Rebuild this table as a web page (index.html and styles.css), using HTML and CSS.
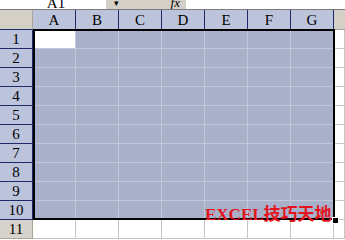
FILE: index.html
```html
<!DOCTYPE html>
<html>
<head>
<meta charset="utf-8">
<link rel="stylesheet" href="styles.css">
</head>
<body>
<div class="app">
  <div class="fbar">
    <div class="namebox"><span class="nb-text">A1</span></div>
    <div class="fbtn"><span class="arrow">▾</span><span class="fx">fx</span></div>
    <div class="fval"></div>
  </div>
  <div class="sheet">
    <div class="grid">
      <div class="corner"></div>
      <div class="ch">A</div><div class="ch">B</div><div class="ch">C</div><div class="ch">D</div><div class="ch">E</div><div class="ch">F</div><div class="ch">G</div><div class="ch-rest"></div>

      <div class="rh">1</div><div class="c active"></div><div class="c"></div><div class="c"></div><div class="c"></div><div class="c"></div><div class="c"></div><div class="c"></div><div class="w"></div>
      <div class="rh">2</div><div class="c"></div><div class="c"></div><div class="c"></div><div class="c"></div><div class="c"></div><div class="c"></div><div class="c"></div><div class="w"></div>
      <div class="rh">3</div><div class="c"></div><div class="c"></div><div class="c"></div><div class="c"></div><div class="c"></div><div class="c"></div><div class="c"></div><div class="w"></div>
      <div class="rh">4</div><div class="c"></div><div class="c"></div><div class="c"></div><div class="c"></div><div class="c"></div><div class="c"></div><div class="c"></div><div class="w"></div>
      <div class="rh">5</div><div class="c"></div><div class="c"></div><div class="c"></div><div class="c"></div><div class="c"></div><div class="c"></div><div class="c"></div><div class="w"></div>
      <div class="rh">6</div><div class="c"></div><div class="c"></div><div class="c"></div><div class="c"></div><div class="c"></div><div class="c"></div><div class="c"></div><div class="w"></div>
      <div class="rh">7</div><div class="c"></div><div class="c"></div><div class="c"></div><div class="c"></div><div class="c"></div><div class="c"></div><div class="c"></div><div class="w"></div>
      <div class="rh">8</div><div class="c"></div><div class="c"></div><div class="c"></div><div class="c"></div><div class="c"></div><div class="c"></div><div class="c"></div><div class="w"></div>
      <div class="rh">9</div><div class="c"></div><div class="c"></div><div class="c"></div><div class="c"></div><div class="c"></div><div class="c"></div><div class="c"></div><div class="w"></div>
      <div class="rh">10</div><div class="c"></div><div class="c"></div><div class="c"></div><div class="c"></div><div class="c"></div><div class="c"></div><div class="c"></div><div class="w"></div>
      <div class="rh plain">11</div><div class="w"></div><div class="w"></div><div class="w"></div><div class="w"></div><div class="w"></div><div class="w"></div><div class="w"></div><div class="w"></div>
    </div>
    <div class="selection"></div>
    <div class="handle"></div>
    <div class="mark">EXCEL技巧天地</div>
  </div>
</div>
</body>
</html>
```

FILE: styles.css
```css
html, body {
  margin: 0;
  padding: 0;
  background: #ffffff;
  overflow: hidden;
}
.app {
  width: 345px;
  height: 240px;
  overflow: hidden;
  font-family: "Liberation Serif", "Noto Sans CJK SC", serif;
}
.fbar {
  display: flex;
  height: 9px;
  border-bottom: 1px solid #7a7a7a;
  overflow: hidden;
}
.namebox {
  width: 106px;
  background: #ffffff;
  display: flex;
  justify-content: center;
  align-items: flex-end;
  overflow: hidden;
}
.nb-text {
  font-size: 15px;
  line-height: 15px;
  margin-bottom: -2px;
  margin-left: 6px;
  color: #000;
}
.fbtn {
  width: 80px;
  background: #d4d0c8;
  display: flex;
  align-items: flex-end;
  overflow: hidden;
}
.arrow {
  font-family: "DejaVu Sans", sans-serif;
  font-size: 9px;
  line-height: 9px;
  margin-left: 8px;
  margin-bottom: 1px;
  color: #000;
}
.fx {
  font-style: italic;
  font-size: 13px;
  line-height: 12px;
  margin-left: 52px;
  margin-bottom: 0px;
  color: #000;
}
.fval {
  flex: 1;
  background: #ffffff;
}
.sheet {
  position: relative;
}
.grid {
  display: grid;
  grid-template-columns: 33px repeat(7, 43px) 1fr;
  grid-template-rows: 20px repeat(11, 19px);
}
.grid > div {
  box-sizing: border-box;
  font-size: 15px;
  display: flex;
  align-items: center;
  justify-content: center;
  color: #000;
}
.corner {
  background: #d4d0c8;
  border-right: 1px solid #a8a496;
  border-bottom: 1px solid #1e2a6a;
}
.ch {
  background: #bcc4dc;
  border-right: 1px solid #1e2a6a;
  border-bottom: 1px solid #1e2a6a;
  padding-top: 1px;
}
.ch-rest {
  background: #d4d0c8;
  border-bottom: 1px solid #a8a496;
}
.rh {
  background: #bcc4dc;
  border-right: 1px solid #1e2a6a;
  border-bottom: 1px solid #1e2a6a;
  padding-top: 1px;
}
.rh.plain {
  background: #d6d3cc;
  border-right: 1px solid #a8a496;
  border-bottom: 1px solid #a8a496;
}
.c {
  background: #a8b0ca;
  border-right: 1px solid #c3c8d8;
  border-bottom: 1px solid #c3c8d8;
}
.c.active {
  background: #ffffff;
}
.w {
  background: #ffffff;
  border-right: 1px solid #c4c4c4;
  border-bottom: 1px solid #c4c4c4;
}
.selection {
  position: absolute;
  left: 33px;
  top: 19px;
  width: 302px;
  height: 191px;
  box-sizing: border-box;
  border: 2px solid #000;
  pointer-events: none;
}
.handle {
  position: absolute;
  left: 332px;
  top: 207px;
  width: 5px;
  height: 5px;
  background: #000;
  border: 1px solid #fff;
  box-sizing: content-box;
}
.mark {
  position: absolute;
  left: 205px;
  top: 196px;
  font-family: "Liberation Serif", "Noto Sans CJK SC", serif;
  font-weight: bold;
  font-size: 17px;
  line-height: 18px;
  color: #e3141c;
  white-space: nowrap;
}
```
